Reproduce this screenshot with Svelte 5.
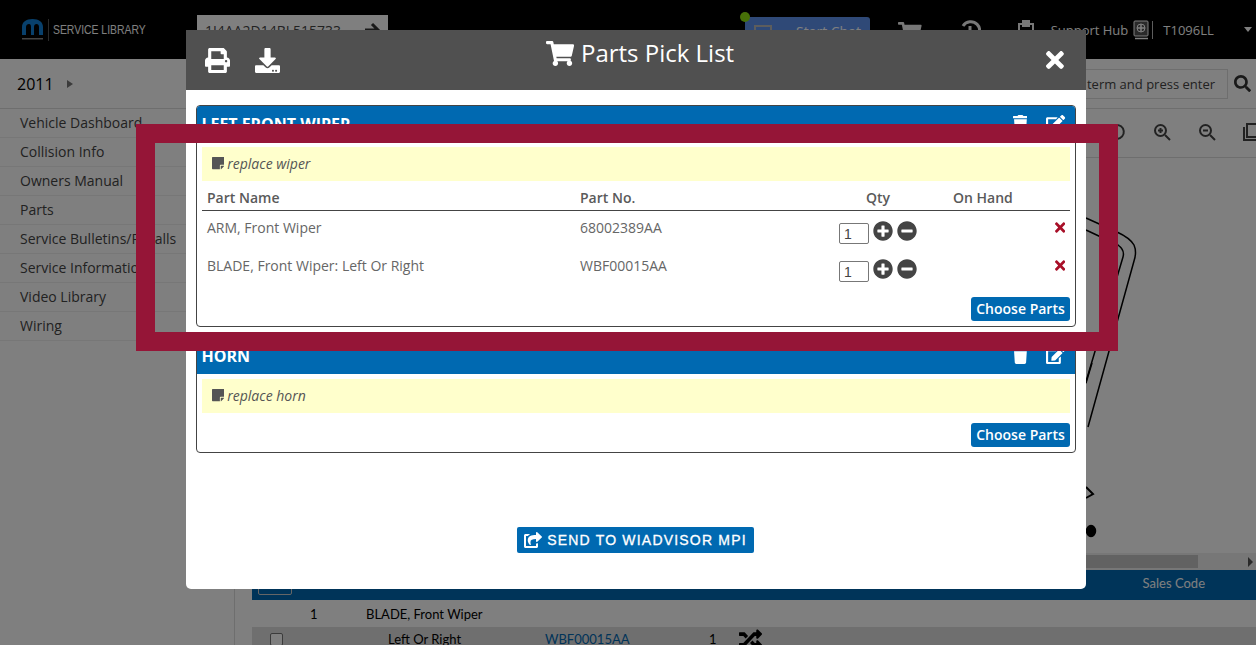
<script>
    const icons = {
        cart: [576, 'M528.12 301.319l47.273-208C578.806 78.301 567.391 64 551.99 64H159.208l-9.166-44.81C147.758 8.021 137.93 0 126.529 0H24C10.745 0 0 10.745 0 24v16c0 13.255 10.745 24 24 24h69.883l70.248 343.435C147.325 417.1 136 435.222 136 456c0 30.928 25.072 56 56 56s56-25.072 56-56c0-15.674-6.447-29.835-16.824-40h209.647C430.447 426.165 424 440.326 424 456c0 30.928 25.072 56 56 56s56-25.072 56-56c0-22.172-12.888-41.332-31.579-50.405l5.517-24.276c3.413-15.018-8.002-29.319-23.403-29.319H218.117l-6.545-32h293.145c11.206 0 20.92-7.754 23.403-18.681z'],
        print: [512, 'M448 192V77.25c0-8.49-3.37-16.62-9.37-22.63L393.37 9.37c-6-6-14.14-9.37-22.63-9.37H96C78.33 0 64 14.33 64 32v160c-35.35 0-64 28.65-64 64v112c0 8.84 7.16 16 16 16h48v96c0 17.67 14.33 32 32 32h320c17.67 0 32-14.33 32-32v-96h48c8.84 0 16-7.16 16-16V256c0-35.35-28.65-64-64-64zm-64 256H128v-96h256v96zm0-224H128V64h192v48c0 8.84 7.16 16 16 16h48v96zm48 72c-13.25 0-24-10.75-24-24 0-13.26 10.75-24 24-24s24 10.74 24 24c0 13.25-10.75 24-24 24z'],
        download: [512, 'M216 0h80c13.3 0 24 10.7 24 24v168h87.7c17.8 0 26.7 21.5 14.1 34.1L269.7 378.3c-7.5 7.5-19.8 7.5-27.3 0L90.1 226.1c-12.6-12.6-3.7-34.1 14.1-34.1H192V24c0-13.3 10.7-24 24-24zm296 376v112c0 13.3-10.7 24-24 24H24c-13.3 0-24-10.7-24-24V376c0-13.3 10.7-24 24-24h146.7l49 49c20.1 20.1 52.5 20.1 72.6 0l49-49H488c13.3 0 24 10.7 24 24zm-124 88c0-11-9-20-20-20s-20 9-20 20 9 20 20 20 20-9 20-20zm64 0c0-11-9-20-20-20s-20 9-20 20 9 20 20 20 20-9 20-20z'],
        trash: [448, 'M432 32H312l-9.4-18.7A24 24 0 0 0 281.1 0H166.8a23.72 23.72 0 0 0-21.4 13.3L136 32H16A16 16 0 0 0 0 48v32a16 16 0 0 0 16 16h416a16 16 0 0 0 16-16V48a16 16 0 0 0-16-16zM53.2 467a48 48 0 0 0 47.9 45h245.8a48 48 0 0 0 47.9-45L416 128H32z'],
        edit: [576, 'M402.6 83.2l90.2 90.2c3.8 3.8 3.8 10 0 13.8L274.4 405.6l-92.8 10.3c-12.4 1.4-22.9-9.1-21.5-21.5l10.3-92.8L388.8 83.2c3.8-3.8 10-3.8 13.8 0zm162-22.9l-48.8-48.8c-15.2-15.2-39.9-15.2-55.2 0l-35.4 35.4c-3.8 3.8-3.8 10 0 13.8l90.2 90.2c3.8 3.8 10 3.8 13.8 0l35.4-35.4c15.2-15.3 15.2-40 0-55.2zM384 346.2V448H64V128h229.8c3.2 0 6.2-1.3 8.5-3.5l40-40c7.6-7.6 2.2-20.5-8.5-20.5H48C21.5 64 0 85.5 0 112v352c0 26.5 21.5 48 48 48h352c26.5 0 48-21.5 48-48V306.2c0-10.7-12.9-16-20.5-8.5l-40 40c-2.2 2.3-3.5 5.3-3.5 8.5z'],
        plus: [512, 'M256 8C119 8 8 119 8 256s111 248 248 248 248-111 248-248S393 8 256 8zm144 276c0 6.6-5.4 12-12 12h-92v92c0 6.6-5.4 12-12 12h-56c-6.6 0-12-5.4-12-12v-92h-92c-6.6 0-12-5.4-12-12v-56c0-6.6 5.4-12 12-12h92v-92c0-6.6 5.4-12 12-12h56c6.6 0 12 5.4 12 12v92h92c6.6 0 12 5.4 12 12v56z'],
        minus: [512, 'M256 8C119 8 8 119 8 256s111 248 248 248 248-111 248-248S393 8 256 8zM124 296c-6.6 0-12-5.4-12-12v-56c0-6.6 5.4-12 12-12h264c6.6 0 12 5.4 12 12v56c0 6.6-5.4 12-12 12H124z'],
        times: [352, 'M242.72 256l100.07-100.07c12.28-12.28 12.28-32.19 0-44.48l-22.24-22.24c-12.28-12.28-32.19-12.28-44.48 0L176 189.28 75.93 89.21c-12.28-12.28-32.19-12.28-44.48 0L9.21 111.45c-12.28 12.28-12.28 32.19 0 44.48L109.28 256 9.21 356.07c-12.28 12.28-12.28 32.19 0 44.48l22.24 22.24c12.28 12.28 32.2 12.28 44.48 0L176 322.72l100.07 100.07c12.28 12.28 32.2 12.28 44.48 0l22.24-22.24c12.28-12.28 12.28-32.19 0-44.48L242.72 256z'],
        note: [448, 'M312 320h136V56c0-13.3-10.7-24-24-24H24C10.7 32 0 42.7 0 56v400c0 13.3 10.7 24 24 24h264V344c0-13.2 10.8-24 24-24zm129 55l-98 98c-4.5 4.5-10.6 7-17 7h-6V352h128v6.1c0 6.3-2.5 12.4-7 16.9z'],
        share: [576, 'M568.482 177.448L424.479 313.433C409.3 327.768 384 317.14 384 295.985v-71.963c-144.575.97-205.566 35.113-164.775 171.353 4.483 14.973-12.846 26.567-25.006 17.33C155.252 383.105 120 326.488 120 269.339c0-143.937 117.599-172.5 264-173.312V24.012c0-21.174 25.317-31.768 40.479-17.448l144.003 135.988c10.02 9.463 10.028 25.425 0 34.896zM384 379.128V448H64V128h50.916a11.99 11.99 0 0 0 8.648-3.693c14.953-15.568 32.237-27.89 51.014-37.676C186.708 80.3 182.235 64 170.009 64H48C21.49 64 0 85.49 0 112v352c0 26.51 21.49 48 48 48h352c26.51 0 48-21.49 48-48v-88.806c0-8.288-8.197-14.066-16.011-11.302a71.83 71.83 0 0 1-34.189 3.377c-7.27-1.046-13.8 4.514-13.8 11.859z'],
        search: [512, 'M505 442.7L405.3 343c-4.5-4.5-10.6-7-17-7H372c27.6-35.3 44-79.7 44-128C416 93.1 322.9 0 208 0S0 93.1 0 208s93.1 208 208 208c48.3 0 92.7-16.4 128-44v16.3c0 6.4 2.5 12.5 7 17l99.7 99.7c9.4 9.4 24.6 9.4 33.9 0l28.3-28.3c9.4-9.4 9.4-24.6.1-34zM208 336c-70.7 0-128-57.2-128-128 0-70.7 57.2-128 128-128 70.7 0 128 57.2 128 128 0 70.7-57.2 128-128 128z'],
        random: [512, 'M504.971 359.029c9.373 9.373 9.373 24.569 0 33.941l-80 79.984c-15.01 15.01-40.971 4.49-40.971-16.971V416h-58.785a12.004 12.004 0 0 1-8.773-3.812l-70.556-75.596 53.333-57.143L352 336h32v-39.981c0-21.438 25.943-31.998 40.971-16.971l80 79.981zM12 176h84l52.781 56.551 53.333-57.143-70.556-75.596A11.999 11.999 0 0 0 122.785 96H12c-6.627 0-12 5.373-12 12v56c0 6.627 5.373 12 12 12zm372 0v39.984c0 21.46 25.961 31.98 40.971 16.971l80-79.984c9.373-9.373 9.373-24.569 0-33.941l-80-79.981C409.943 24.021 384 34.582 384 56.019V96h-58.785a12.004 12.004 0 0 0-8.773 3.812L96 336H12c-6.627 0-12 5.373-12 12v56c0 6.627 5.373 12 12 12h110.785c3.326 0 6.503-1.381 8.773-3.812L352 176h32z']
    }

    const menu = ['Vehicle Dashboard', 'Collision Info', 'Owners Manual', 'Parts', 'Service Bulletins/Recalls', 'Service Information', 'Video Library', 'Wiring']

    const lists = [
        {
            title: 'LEFT FRONT WIPER',
            note: 'replace wiper',
            parts: [
                { name: 'ARM, Front Wiper', no: '68002389AA' },
                { name: 'BLADE, Front Wiper: Left Or Right', no: 'WBF00015AA' }
            ]
        },
        { title: 'HORN', note: 'replace horn', parts: [] }
    ]
</script>

{#snippet icon(name, h)}
    <svg class="ico" width={(h * icons[name][0]) / 512} height={h} viewBox="0 0 {icons[name][0]} 512" fill="currentColor">
        <path d={icons[name][1]} />
    </svg>
{/snippet}

<div class="page">
    <header class="topbar">
        <div class="brand">
            <svg width="23" height="26" viewBox="0 0 23 26">
                <path d="M1 18V10C1 5 5 2 11.500 2S22 5 22 10v8h-4V10c0-2-1-3-2.500-3S13 8 13 10v8h-3V10c0-2-.5-3-2-3S5 8 5 10v8z" fill="#1080d8" />
                <rect x="1" y="21" width="21" height="1.500" fill="#888" />
            </svg>
            <span class="brand-line"></span>
            <span class="brand-name">SERVICE LIBRARY</span>
        </div>
        <div class="vin">
            <span>1J4AA2D14BL515733</span>
            <svg class="vin-go" width="16" height="16" viewBox="0 0 16 16" fill="none" stroke="#333" stroke-width="3"><path d="M0 8h13M7 2l6 6-6 6" /></svg>
        </div>
        <div class="top-right">
            <div class="chat"><span class="chat-dot"></span><span class="chat-box"></span>Start Chat</div>
            <span class="top-ico">{@render icon('cart', 21)}</span>
            <span class="top-ico hist">
                <svg width="22" height="22" viewBox="0 0 22 22" fill="none" stroke="currentColor" stroke-width="3"><path d="M4 6a9 9 0 1 1-1 7" /><path d="M11 6v6l4 2" /></svg>
            </span>
            <span class="top-ico clip">
                <svg width="16" height="22" viewBox="0 0 16 22" fill="none" stroke="currentColor" stroke-width="2"><rect x="1" y="4" width="14" height="17" /><rect x="5" y="1" width="6" height="5" fill="currentColor" /></svg>
            </span>
            <span class="hub">Support Hub</span>
            <svg class="book" width="16" height="20" viewBox="0 0 16 20" fill="none" stroke="#fff">
                <rect x="1" y="1" width="14" height="15" rx="1" fill="#555" />
                <circle cx="8" cy="8" r="4" />
                <path d="M4 8h8M8 4v8M2 18.500h13" stroke-width="1.500" />
            </svg>
            <span class="user">T1096LL</span>
            <span class="caret-down"></span>
        </div>
    </header>

    <div class="subbar">
        <div class="year">2011 <span class="caret-right"></span></div>
        <div class="search">
            <div class="search-box">Enter search term and press enter</div>
            <span class="search-ico">{@render icon('search', 17)}</span>
        </div>
    </div>

    <div class="main">
        <nav class="side">
            {#each menu as item}
                <div class="side-item">{item}</div>
            {/each}
        </nav>
        <section class="content">
            <div class="tools">
                <svg width="18" height="18" viewBox="0 0 18 18" fill="none" stroke="#444" stroke-width="2"><path d="M3 5a7 7 0 1 1 1 9" /></svg>
                <svg width="18" height="18" viewBox="0 0 18 18" fill="none" stroke="#444" stroke-width="2"><circle cx="7.500" cy="7.500" r="5.500" /><path d="M12 12l5 5M5 7.500h5M7.500 5v5" /></svg>
                <svg width="18" height="18" viewBox="0 0 18 18" fill="none" stroke="#444" stroke-width="2"><circle cx="7.500" cy="7.500" r="5.500" /><path d="M12 12l5 5M5 7.500h5" /></svg>
                <svg width="18" height="18" viewBox="0 0 18 18" fill="none" stroke="#444" stroke-width="2"><rect x="4" y="1" width="13" height="13" /><path d="M1 4v13h13" /></svg>
            </div>
            <div class="drawing">
                <svg class="wiper" width="1256" height="400" viewBox="0 158 1256 400" fill="none" stroke="#000" stroke-width="1.500">
                    <path d="M1086 218l31 14q13 6 17 13 3 7 0 16l-46 166" />
                    <path d="M1086 230l32 15q7 5 5 12l-38 128" />
                    <path d="M1086 383l6-20" />
                    <path d="M1086 487l7 7-7 4" stroke-width="2" />
                    <ellipse cx="1091" cy="531" rx="4.500" ry="5.500" fill="#000" />
                </svg>
            </div>
            <div class="hscroll">
                <div class="thumb"></div>
                <span class="scroll-arrow"></span>
            </div>
            <div class="thead">
                <span class="thead-btn"></span>
                <span>Sales Code</span>
            </div>
            <div class="row first">
                <span>1</span>
                <span>BLADE, Front Wiper</span>
            </div>
            <div class="row second">
                <span class="check"></span>
                <span>Left Or Right</span>
                <span class="partlink">WBF00015AA</span>
                <span>1</span>
                <span class="swap">{@render icon('random', 23)}</span>
            </div>
        </section>
    </div>

    <div class="overlay"></div>

    <div class="modal">
        <div class="modal-head">
            <div class="head-tools">
                {@render icon('print', 25)}
                {@render icon('download', 25)}
            </div>
            <h2>{@render icon('cart', 25)} Parts Pick List</h2>
            <div class="head-close">{@render icon('times', 26)}</div>
        </div>
        <div class="modal-body">
            {#each lists as list}
                <div class="card">
                    <div class="card-head">
                        <strong>{list.title}</strong>
                        <span class="card-ico trash">{@render icon('trash', 17)}</span>
                        <span class="card-ico">{@render icon('edit', 17)}</span>
                    </div>
                    <div class="card-note">{@render icon('note', 14)} <em>{list.note}</em></div>
                    {#if list.parts.length}
                        <div class="grid grid-head">
                            <span>Part Name</span>
                            <span>Part No.</span>
                            <span class="qty-label">Qty</span>
                            <span>On Hand</span>
                            <span></span>
                        </div>
                        {#each list.parts as part}
                            <div class="grid grid-row">
                                <span>{part.name}</span>
                                <span>{part.no}</span>
                                <span class="qty">
                                    <input value="1" />
                                    <span class="qty-btn">{@render icon('plus', 20)}</span>
                                    <span class="qty-btn">{@render icon('minus', 20)}</span>
                                </span>
                                <span></span>
                                <span class="remove">{@render icon('times', 15)}</span>
                            </div>
                        {/each}
                    {/if}
                    <div class="card-foot">
                        <button class="choose">Choose Parts</button>
                    </div>
                </div>
            {/each}
            <div class="send-wrap">
                <button class="send">{@render icon('share', 16)} SEND TO WIADVISOR MPI</button>
            </div>
        </div>
    </div>

    <div class="frame"></div>
</div>

<style>
    :global(body) {
        margin: 0;
        font-family: "Open Sans", sans-serif;
    }

    .ico {
        display: block;
    }

    .page {
        position: relative;
        width: 1256px;
        height: 645px;
        overflow: hidden;
        background: #fff;
        color: #444;
        font-size: 14px;
    }

    .topbar {
        height: 59px;
        background: #000;
        display: flex;
        align-items: flex-start;
        color: #fff;
    }

    .brand {
        display: flex;
        align-items: center;
        gap: 4px;
        width: 197px;
        flex: none;
        height: 59px;
        padding-left: 21px;
        box-sizing: border-box;
    }

    .brand-line {
        width: 1px;
        height: 22px;
        background: #555;
    }

    .brand-name {
        font-family: "Liberation Sans", sans-serif;
        font-size: 13px;
        color: #fff;
        transform: scaleX(0.8);
        transform-origin: left center;
        white-space: nowrap;
    }

    .vin {
        flex: none;
        margin-top: 15px;
        width: 191px;
        height: 34px;
        box-sizing: border-box;
        padding: 6px 7px 0 8px;
        background: #fff;
        color: #444;
        display: flex;
        justify-content: space-between;
    }

    .vin-go {
        margin-top: 1px;
    }

    .top-right {
        flex: none;
        margin-left: 357px;
        display: flex;
        align-items: center;
        height: 59px;
        white-space: nowrap;
    }

    .chat {
        position: relative;
        width: 125px;
        height: 28px;
        box-sizing: border-box;
        padding: 5px 0 0 51px;
        background: #5f93ef;
        border-radius: 3px;
        color: #fff;
        align-self: flex-start;
        margin-top: 17px;
    }

    .chat-dot {
        position: absolute;
        left: -5px;
        top: -5px;
        width: 10px;
        height: 10px;
        border-radius: 50%;
        background: #8fe010;
    }

    .chat-box {
        position: absolute;
        left: 9px;
        top: 8px;
        width: 14px;
        height: 14px;
        border: 2px solid #bbb;
    }

    .top-ico {
        flex: none;
        color: #eee;
        margin-left: 28px;
        margin-top: 6px;
    }

    .hist {
        margin-left: 37px;
    }

    .clip {
        margin-left: 37px;
    }

    .hub {
        margin-left: 17px;
        font-size: 13px;
    }

    .book {
        margin-left: 5px;
        flex: none;
    }

    .user {
        margin-left: 3px;
        padding-left: 10px;
        border-left: 1px solid #bbb;
        font-size: 13px;
        line-height: 18px;
    }

    .caret-down {
        flex: none;
        width: 0;
        height: 0;
        margin-left: 30px;
        border: 4px solid transparent;
        border-top: 5px solid #fff;
        border-bottom: 0;
    }

    .subbar {
        height: 50px;
        display: flex;
        justify-content: space-between;
        align-items: center;
        border-bottom: 1px solid #ddd;
        box-sizing: border-box;
    }

    .year {
        padding-left: 17px;
        font-size: 16px;
        color: #000;
        display: flex;
        align-items: center;
        gap: 13px;
    }

    .caret-right {
        border: 4px solid transparent;
        border-left: 6px solid #777;
        border-right: 0;
    }

    .search {
        display: flex;
        align-items: center;
    }

    .search-box {
        width: 330px;
        height: 30px;
        line-height: 29px;
        box-sizing: border-box;
        border: 1px solid #ddd;
        font-size: 13px;
        text-align: right;
        padding-right: 12px;
    }

    .search-ico {
        color: #333;
        margin: 0 5px 0 6px;
    }

    .main {
        display: flex;
        height: 536px;
    }

    .side {
        width: 235px;
        flex: none;
        border-right: 1px solid #ddd;
        box-sizing: border-box;
    }

    .side-item {
        height: 29px;
        line-height: 28px;
        padding-left: 20px;
        border-bottom: 1px solid #eee;
        box-sizing: border-box;
    }

    .content {
        flex: 1;
        margin-left: 17px;
        min-width: 0;
    }

    .tools {
        height: 49px;
        box-sizing: border-box;
        border-bottom: 1px solid #ddd;
        display: flex;
        justify-content: flex-end;
        align-items: center;
        gap: 27px;
        margin-right: -5px;
        padding-bottom: 3px;
    }

    .drawing {
        height: 395px;
    }

    .wiper {
        position: absolute;
        left: 0;
        top: 158px;
    }

    .hscroll {
        height: 17px;
        background: #eee;
        display: flex;
        align-items: center;
        justify-content: space-between;
    }

    .thumb {
        width: 946px;
        height: 13px;
        background: #c4c4c4;
    }

    .scroll-arrow {
        margin-right: 3px;
        border: 5px solid transparent;
        border-left: 5px solid #555;
        border-right: 0;
    }

    .thead {
        height: 30px;
        background: #0068b2;
        color: #fff;
        font-family: "Lato", sans-serif;
        font-size: 13px;
        display: flex;
        justify-content: space-between;
        align-items: center;
        padding: 0 51px 4px 6px;
        box-sizing: border-box;
    }

    .thead-btn {
        width: 34px;
        height: 22px;
        align-self: flex-start;
        margin-top: 3px;
        box-sizing: border-box;
        border: 1px solid #ccc;
        border-radius: 2px;
    }

    .row {
        position: relative;
        height: 27px;
        line-height: 29px;
        display: grid;
        font-size: 13px;
        font-family: "Lato", sans-serif;
        color: #000;
    }

    .first {
        grid-template-columns: 56px 1fr;
        padding-left: 58px;
        box-sizing: border-box;
    }

    .second {
        height: 24px;
        line-height: 24px;
        background: #dedede;
        grid-template-columns: 118px 157px 164px 30px 1fr;
        align-items: center;
        padding-left: 18px;
        box-sizing: border-box;
    }

    .check {
        width: 11px;
        height: 11px;
        border: 1px solid #777;
        border-radius: 2px;
        background: #fff;
    }

    .partlink {
        color: #0068b2;
    }

    .swap {
        color: #000;
    }

    .overlay {
        position: absolute;
        left: 0;
        top: 0;
        width: 1256px;
        height: 645px;
        z-index: 1;
        background: rgba(0, 0, 0, 0.5);
    }

    .modal {
        position: absolute;
        z-index: 2;
        left: 186px;
        top: 30px;
        width: 900px;
        height: 559px;
        background: #fff;
        border-radius: 0 0 5px 5px;
    }

    .modal-head {
        height: 60px;
        background: #505050;
        color: #fff;
        display: grid;
        grid-template-columns: 1fr auto 1fr;
        align-items: center;
    }

    .head-tools {
        display: flex;
        gap: 25px;
        padding-left: 19px;
    }

    .modal-head h2 {
        margin: 0 0 14px 8px;
        font-size: 24px;
        font-weight: 400;
        display: flex;
        align-items: center;
        gap: 7px;
        line-height: 28px;
    }

    .head-close {
        justify-self: end;
        padding-right: 22px;
    }

    .modal-body {
        padding: 15px 10px 0;
    }

    .card {
        border: 1px solid #444;
        border-radius: 4px;
        margin-bottom: 10px;
        overflow: hidden;
    }

    .card-head {
        height: 36px;
        box-sizing: border-box;
        background: #0069b1;
        color: #fff;
        display: flex;
        align-items: center;
        padding: 0 9.500px 1px 4.500px;
        font-size: 16px;
    }

    .card-head strong {
        flex: 1;
    }

    .card-ico.trash {
        margin-right: 19px;
    }

    .card-note {
        margin: 5px 5px 5px;
        height: 34px;
        background: #ffc;
        display: flex;
        align-items: center;
        gap: 3px;
        padding: 0 0 2px 10px;
        box-sizing: border-box;
        color: #555;
    }

    .grid {
        display: grid;
        grid-template-columns: 373px 259px 114px 92px 30px;
        margin: 0 5px;
    }

    .grid > span {
        padding-left: 5px;
    }

    .grid-head {
        height: 25px;
        line-height: 24px;
        box-sizing: border-box;
        border-bottom: 1px solid #444;
        font-weight: 600;
        color: #5a5a5a;
    }

    .qty-label {
        padding-left: 32px !important;
    }

    .grid-row {
        height: 38px;
        color: #666;
        line-height: 34px;
    }

    .qty {
        display: flex;
        align-items: center;
        gap: 4px;
        height: 38px;
        margin-top: 1px;
    }

    .qty input {
        width: 30px;
        height: 21px;
        box-sizing: border-box;
        border: 1px solid #777;
        border-radius: 2px;
        padding: 1px 4px 0;
        margin-top: 5px;
        font-family: "Liberation Sans", sans-serif;
        font-size: 14px;
        color: #444;
    }

    .qty-btn {
        color: #444;
    }

    .remove {
        color: #a80f28;
        display: flex;
        justify-content: flex-end;
        padding: 9px 5px 0 0 !important;
    }

    .card-foot {
        display: flex;
        justify-content: flex-end;
        padding: 5px;
    }

    .grid-row + .card-foot {
        padding-top: 10px;
    }

    .choose {
        width: 99px;
        height: 24px;
        border: 0;
        border-radius: 3px;
        padding: 0 0 2px;
        background: #0069b1;
        color: #fff;
        font-family: "Open Sans", sans-serif;
        font-size: 14px;
        font-weight: 600;
    }

    .send-wrap {
        display: flex;
        justify-content: center;
        margin-top: 74px;
        padding-right: 1px;
    }

    .send {
        width: 237px;
        height: 26px;
        border: 0;
        border-radius: 2px;
        padding: 0;
        background: #0069b1;
        color: #fff;
        display: flex;
        align-items: center;
        justify-content: center;
        gap: 5px;
        font-family: "Liberation Sans", sans-serif;
        font-size: 14px;
        letter-spacing: 1.200px;
        -webkit-text-stroke: 0.3px #fff;
    }

    .frame {
        position: absolute;
        z-index: 3;
        left: 136px;
        top: 124px;
        width: 982px;
        height: 227px;
        box-sizing: border-box;
        border: 19px solid #951537;
    }
</style>
